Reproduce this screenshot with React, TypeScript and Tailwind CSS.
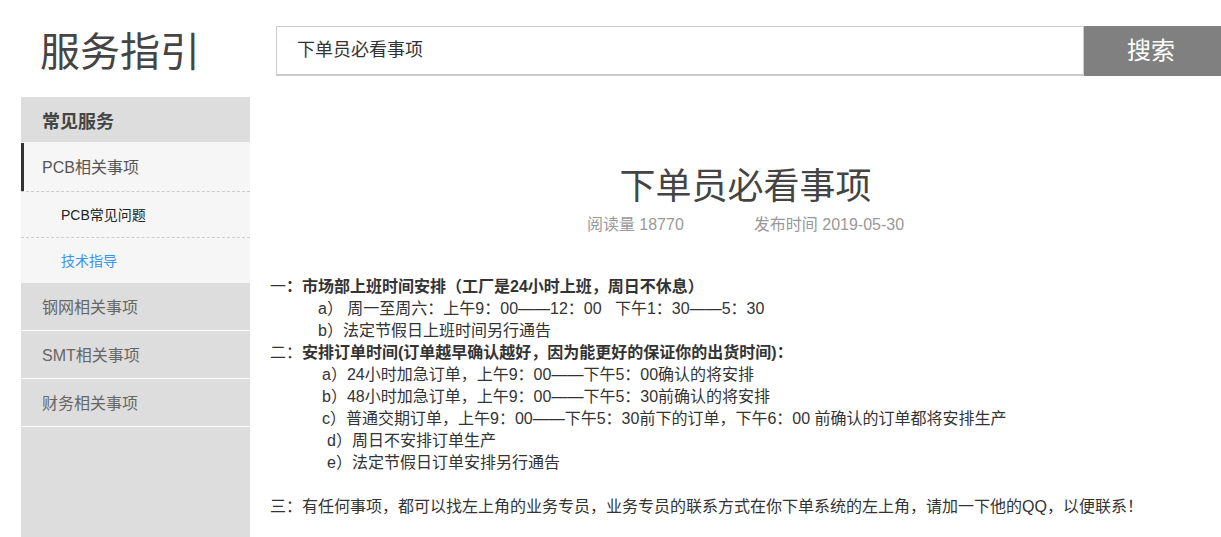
import React from "react";

const font = { fontFamily: '"Liberation Sans", "Noto Sans CJK SC", sans-serif' };

export default function App() {
  return (
    <div className="w-[1221px] h-[537px] overflow-hidden bg-white text-[#333]" style={font}>
      <div className="flex h-[97px] pt-[26px]">
        <div className="w-[276px] pl-[40px] text-[40px] leading-[52px] text-[#444]">服务指引</div>
        <div className="flex-1 h-[50px] border border-[#ccc] border-b-2 pl-[20px] flex items-center text-[18px] text-[#333]">
          下单员必看事项
        </div>
        <div className="w-[137px] h-[50px] bg-[#808080] text-white text-[24px] flex items-center justify-center pr-[3px]">
          搜索
        </div>
      </div>
      <div className="flex">
        <div className="ml-[21px] w-[229px] h-[440px] bg-[#ddd]">
          <div className="h-[45px] flex items-center pl-[21px] pt-[5px] text-[18px] font-bold text-[#444]">常见服务</div>
          <div className="bg-[#f6f6f6]">
            <div className="h-[50px] border-b border-dashed border-[#ccc] flex">
              <div className="w-[3px] h-[48px] mt-[1px] bg-[#333]"></div>
              <div className="pl-[18px] pt-[2px] flex items-center text-[16px] text-[#555]">PCB相关事项</div>
            </div>
            <div className="h-[46px] border-b border-dashed border-[#ccc] flex items-center pl-[40px] pt-[2px] text-[14px] text-[#222]">PCB常见问题</div>
            <div className="h-[45px] flex items-center pl-[40px] pt-[2px] text-[14px] text-[#3a93f5]">技术指导</div>
          </div>
          {["钢网相关事项", "SMT相关事项", "财务相关事项"].map((t) => (
            <div key={t} className="h-[48px] border-b border-white flex items-center pl-[21px] pt-[2px] text-[16px] text-[#666]">
              {t}
            </div>
          ))}
        </div>
        <div className="flex-1 pl-[20px]">
          <div className="mt-[66px] text-center text-[36px] leading-[48px] text-[#444]">下单员必看事项</div>
          <div className="mt-[2px] flex justify-center gap-[70px] text-[16px] leading-[24px] text-[#999]">
            <span>阅读量 18770</span>
            <span>发布时间 2019-05-30</span>
          </div>
          <div className="mt-[39px] text-[16px] leading-[22px] text-[#333]">
            <div>
              <span>一</span>
              <span className="font-bold">：市场部上班时间安排（工厂是24小时上班，周日不休息）</span>
            </div>
            <div className="pl-[48px]">a） 周一至周六：上午9：00——12：00&nbsp;&nbsp;&nbsp;下午1：30——5：30</div>
            <div className="pl-[48px]">b）法定节假日上班时间另行通告</div>
            <div>
              <span>二：</span>
              <span className="font-bold">安排订单时间(订单越早确认越好，因为能更好的保证你的出货时间)：</span>
            </div>
            <div className="pl-[52px]">a）24小时加急订单，上午9：00——下午5：00确认的将安排</div>
            <div className="pl-[52px]">b）48小时加急订单，上午9：00——下午5：30前确认的将安排</div>
            <div className="pl-[52px]">c）普通交期订单，上午9：00——下午5：30前下的订单，下午6：00 前确认的订单都将安排生产</div>
            <div className="pl-[57px]">d）周日不安排订单生产</div>
            <div className="pl-[57px]">e）法定节假日订单安排另行通告</div>
            <div className="h-[22px]"></div>
            <div>三：有任何事项，都可以找左上角的业务专员，业务专员的联系方式在你下单系统的左上角，请加一下他的QQ，以便联系！</div>
          </div>
        </div>
      </div>
    </div>
  );
}
